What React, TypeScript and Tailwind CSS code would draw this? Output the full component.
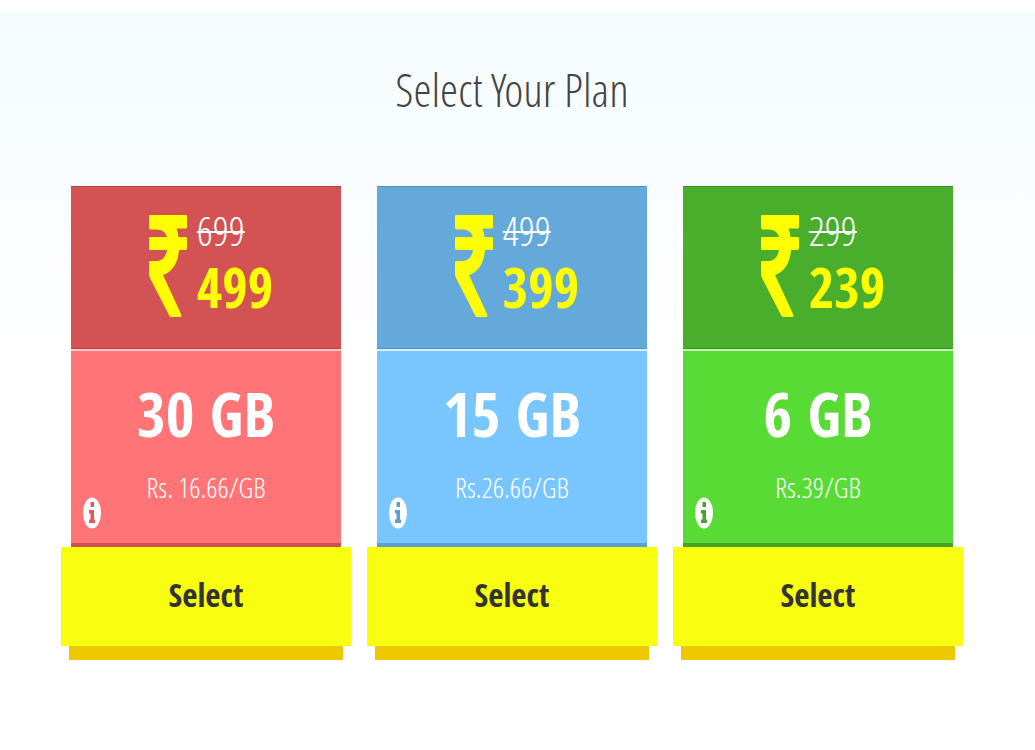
const plans = [
  { was: '699', now: '499', size: '30 GB', rate: 'Rs. 16.66/GB', head: 'bg-[#d35354] border-[#b84546]', body: 'bg-[#ff7476] border-t-[#ffc4c5] border-b-[#cf5253]', info: 'text-[#e05a5c]' },
  { was: '499', now: '399', size: '15 GB', rate: 'Rs.26.66/GB', head: 'bg-[#65a9db] border-[#5592bf]', body: 'bg-[#79c6ff] border-t-[#d9efff] border-b-[#5c9fd0]', info: 'text-[#5c9fd0]' },
  { was: '299', now: '239', size: '6 GB', rate: 'Rs.39/GB', head: 'bg-[#4aae2d] border-[#3c9123]', body: 'bg-[#59db36] border-t-[#c2f5b4] border-b-[#45a52a]', info: 'text-[#45a52a]' },
];

function Rupee() {
  return (
    <svg viewBox="0 0 38 102" preserveAspectRatio="none" className="h-[102px] w-[38px] fill-[#ffff00]" aria-label="Rupees" role="img">
      <path d="M0 1Q0 0 1 0H37Q38 0 38 1V12Q38 13.500 37 13.500H27.500Q29 17 29.500 22H37Q38 22 38 23.500V33Q38 35 37 35H30C29 47 24 57 14 60L32 99Q33 102 31 102H22Q21 102 20.500 101L1 63Q0 61 0 59V48Q0 46 1 46H7C13 46 17 42 18 35H1Q0 35 0 33V23.500Q0 22 1 22H18C16 16 12 14.500 6 14.500H1Q0 14 0 12Z" />
    </svg>
  );
}

function Info({ tone }: { tone: string }) {
  return (
    <svg viewBox="0 0 18 32" className={`h-8 w-[18px] ${tone}`} aria-hidden="true">
      <ellipse cx="9" cy="16" rx="9" ry="15.500" fill="white" />
      <path d="M7.500 5H11V10H7.500ZM6 13H11V22.500H12V26H6V22.500H7.500V16.500H6Z" fill="currentColor" />
    </svg>
  );
}

export default function App() {
  return (
    <main className="min-h-screen bg-white pt-[13px] font-['Open_Sans_Condensed_Light','Open_Sans',sans-serif]">
      <section className="bg-linear-to-b from-[#f5fcff] to-white to-50% pr-[72px] pl-[61px] pb-20">
        <h1 className="pt-12 text-center text-[46px] leading-[56px] font-light text-[#444444]">Select Your Plan</h1>
        <div className="grid grid-cols-3 gap-4 pt-[69px]">
          {plans.map((p) => (
            <article key={p.size}>
              <div className="mx-[10px]">
                <header className={`flex h-[163px] justify-center gap-[10px] border-y pt-7 pl-[10px] ${p.head}`}>
                  <Rupee />
                  <div className="flex flex-col">
                    <s className="text-[40px] leading-[32px] text-white decoration-2">{p.was}</s>
                    <strong className="font-['Open_Sans_Condensed','Open_Sans',sans-serif] text-[55px] leading-[80px] font-semibold text-[#ffff00]">{p.now}</strong>
                  </div>
                </header>
                <div className={`relative h-[198px] border-t-2 border-b-4 pt-6 text-center text-white ${p.body}`}>
                  <h2 className="font-['Open_Sans_Condensed','Open_Sans',sans-serif] text-[62px] leading-[76px] font-bold">{p.size}</h2>
                  <p className="pt-3 text-[28px] leading-[48px]">{p.rate}</p>
                  <button type="button" aria-label="Plan details" className="absolute bottom-[14px] left-3">
                    <Info tone={p.info} />
                  </button>
                </div>
              </div>
              <button type="button" className="h-[99px] w-full bg-[#f9fd10] pb-1 font-['Open_Sans_Condensed','Open_Sans',sans-serif] text-[33px] font-semibold text-[#333333]">Select</button>
              <div className="mx-2 h-[14px] bg-[#ecc900]" />
            </article>
          ))}
        </div>
      </section>
    </main>
  );
}
